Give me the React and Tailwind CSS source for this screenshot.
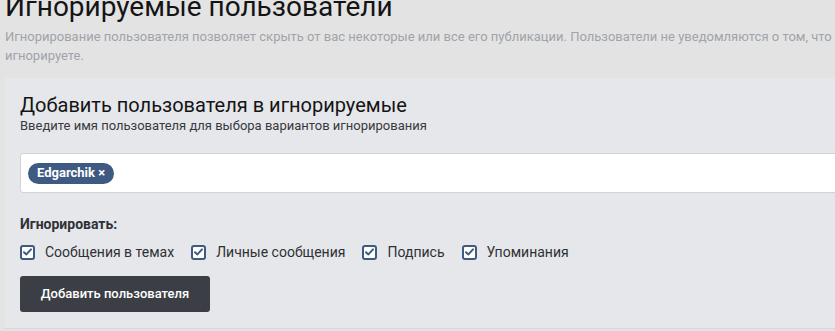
import React from "react";

function Check({ label }) {
  return (
    <label className="flex items-center gap-[10px] mr-[17px]">
      <span className="w-[15px] h-[15px] rounded-[3px] border-2 border-[#3e5a82] bg-white flex items-center justify-center">
        <svg width="9" height="8" viewBox="0 0 9 8">
          <path d="M1 4.2 L3.4 6.4 L8 1.4" fill="none" stroke="#3e5a82" strokeWidth="2" strokeLinecap="round" strokeLinejoin="round" />
        </svg>
      </span>
      <span className="text-[14px] text-[#2f3135]">{label}</span>
    </label>
  );
}

export default function App() {
  return (
    <div className="w-[835px] h-[331px] overflow-hidden bg-[#e3e3e3]" style={{ fontFamily: "Roboto, 'Liberation Sans', sans-serif" }}>
      <div className="w-[900px] pl-[5px]">
        <h1 className="text-[28px] leading-[34px] text-[#141414] mt-[-10px] font-normal">Игнорируемые пользователи</h1>
        <p className="text-[13px] leading-[19px] text-[#a0a4aa] mt-[3px]">
          Игнорирование пользователя позволяет скрыть от вас некоторые или все его публикации. Пользователи не уведомляются о том, что вы их
          <br />
          игнорируете.
        </p>
        <div className="mt-[13px] bg-[#e6e7eb] border-b border-[#d8d8da] pl-[15px] pt-[15px] pb-[16px]">
          <h2 className="text-[20px] leading-[24px] text-[#141414]">Добавить пользователя в игнорируемые</h2>
          <div className="text-[13px] leading-[16px] text-[#38393d] mt-[1px]">Введите имя пользователя для выбора вариантов игнорирования</div>
          <div className="mt-[19px] h-[40px] bg-white border border-[#d3d3d5] rounded-l-[3px] flex items-center pl-[7px]">
            <span className="h-[21px] px-[9px] rounded-full bg-[#3e5a82] text-white text-[13px] font-bold flex items-center">Edgarchik ×</span>
          </div>
          <div className="mt-[22px] text-[14px] font-bold text-[#2f3135] leading-[18px]">Игнорировать:</div>
          <div className="flex mt-[9px] h-[20px]">
            <Check label="Сообщения в темах" />
            <Check label="Личные сообщения" />
            <Check label="Подпись" />
            <Check label="Упоминания" />
          </div>
          <button className="mt-[14px] w-[190px] h-[36px] rounded-[3px] bg-[#3c3e46] text-white text-[13px] font-medium">Добавить пользователя</button>
        </div>
      </div>
    </div>
  );
}
